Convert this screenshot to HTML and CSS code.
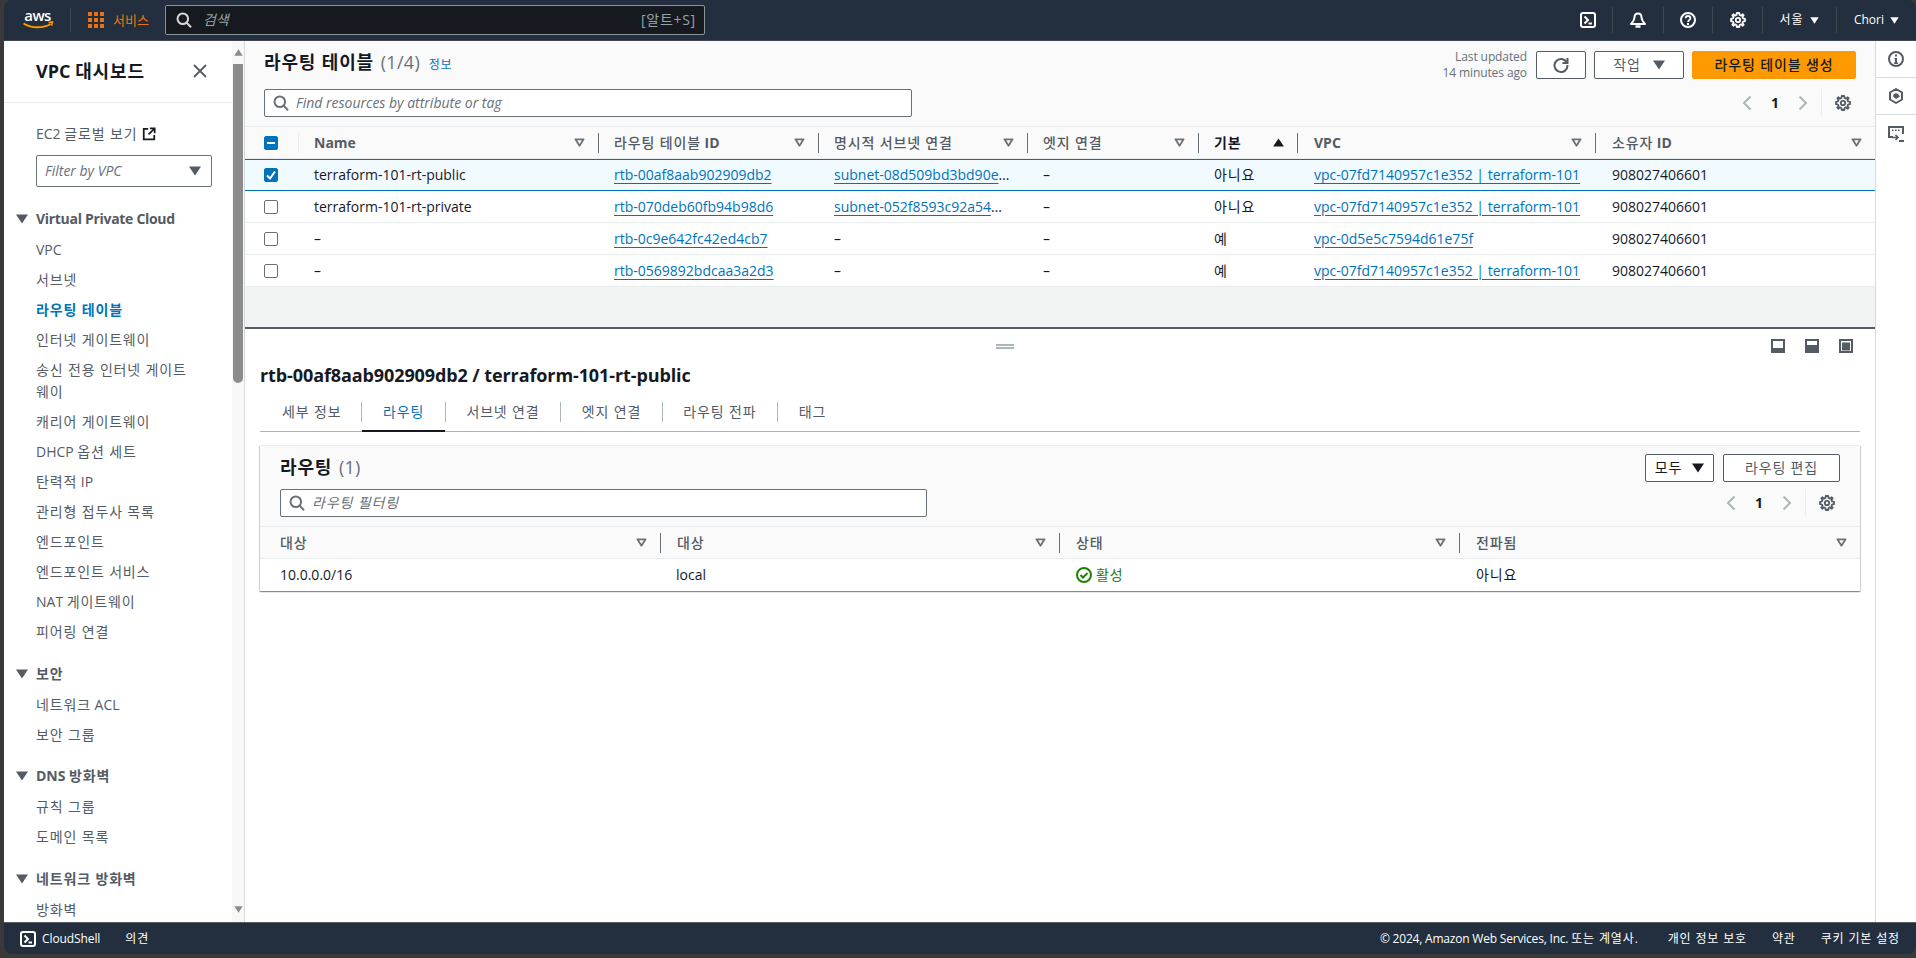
FILE: index.html
```html
<!DOCTYPE html>
<html lang="ko">
<head>
<meta charset="utf-8">
<title>라우팅 테이블 | VPC Console</title>
<link rel="stylesheet" href="styles.css">
</head>
<body>
<svg class="defs" aria-hidden="true">
  <symbol id="sort" viewBox="0 0 12 10"><path d="M1.500 1.500h9L6 8.500z" fill="none" stroke="currentColor" stroke-width="2" stroke-linejoin="round"/></symbol>
  <symbol id="caret" viewBox="0 0 12 10"><path d="M0 .5h12L6 9.500z" fill="currentColor"/></symbol>
  <symbol id="caret-up" viewBox="0 0 12 10"><path d="M0 9.500h12L6 .5z" fill="currentColor"/></symbol>
  <symbol id="search" viewBox="0 0 16 16"><circle cx="6.800" cy="6.800" r="5.300" fill="none" stroke="currentColor" stroke-width="2"/><path d="M10.600 10.600l4.400 4.600" fill="none" stroke="currentColor" stroke-width="2"/></symbol>
  <symbol id="gear" viewBox="0 0 16 16"><path d="M6.800 1h2.400l.4 2 1.400.6 1.700-1.300 1 1-1.300 1.700.6 1.400 2 .4v2.400l-2 .4-.6 1.400 1.300 1.700-1 1-1.700-1.300-1.400.6-.4 2H6.800l-.4-2-1.400-.6-1.700 1.300-1-1L3.600 11 3 9.600l-2-.4V6.800l2-.4.6-1.400-1.300-1.700 1-1L5 3.600 6.400 3z" fill="none" stroke="currentColor" stroke-width="1.800" stroke-linejoin="round"/><circle cx="8" cy="8" r="2.200" fill="none" stroke="currentColor" stroke-width="1.800"/></symbol>
  <symbol id="shell" viewBox="0 0 16 16"><rect x="1" y="1" width="14" height="14" rx="2" fill="none" stroke="currentColor" stroke-width="2"/><path d="M4.500 4.500L8 8l-3.500 3.500" fill="none" stroke="currentColor" stroke-width="2"/><path d="M8.500 11.500h3.500" fill="none" stroke="currentColor" stroke-width="2"/></symbol>
  <symbol id="prev" viewBox="0 0 12 16"><path d="M9.500 1.500L3 8l6.500 6.500" fill="none" stroke="currentColor" stroke-width="2"/></symbol>
  <symbol id="next" viewBox="0 0 12 16"><path d="M2.500 1.500L9 8l-6.500 6.500" fill="none" stroke="currentColor" stroke-width="2"/></symbol>
</svg>

<header class="topbar">
  <a class="logo">
    <svg class="logo-svg" viewBox="0 0 32 22"><text x="15.500" y="12" text-anchor="middle" class="logo-text">aws</text><path d="M1.500 14.500c8 5 20 5 27 .5" fill="none" stroke="#f90" stroke-width="2"/><path d="M26.500 13.500l4-.5-1 3.800" fill="none" stroke="#f90" stroke-width="1.500"/></svg>
  </a>
  <span class="top-sep first"></span>
  <a class="services">
    <svg class="grid-icon" viewBox="0 0 16 16"><path d="M0 0h4v4H0zM6 0h4v4H6zM12 0h4v4h-4zM0 6h4v4H0zM6 6h4v4H6zM12 6h4v4h-4zM0 12h4v4H0zM6 12h4v4H6zM12 12h4v4h-4z" fill="currentColor"/></svg>
    <span>서비스</span>
  </a>
  <div class="global-search">
    <svg class="ico16"><use href="#search"/></svg>
    <span class="gs-placeholder">검색</span>
    <span class="gs-key">[알트+S]</span>
  </div>
  <div class="top-actions">
    <span class="top-btn b1"><svg class="ico16"><use href="#shell"/></svg></span>
    <span class="top-btn b2"><svg class="ico16" viewBox="0 0 16 16"><path d="M8 1.500c2.500 0 3.500 2 3.500 4 0 3 2.500 5 3.500 6.500H1c1-1.500 3.500-3.500 3.500-6.500 0-2 1-4 3.500-4z" fill="none" stroke="currentColor" stroke-width="2" stroke-linejoin="round"/><path d="M5.500 14.500h5" stroke="currentColor" stroke-width="2.500"/></svg></span>
    <span class="top-btn b3"><svg class="ico16" viewBox="0 0 16 16"><circle cx="8" cy="8" r="7" fill="none" stroke="currentColor" stroke-width="2"/><path d="M5.600 6.300c0-3.100 4.800-3.100 4.800 0 0 1.700-2.400 1.900-2.400 3.700" fill="none" stroke="currentColor" stroke-width="1.800"/><path d="M7 11h2v2H7z" fill="currentColor"/></svg></span>
    <span class="top-btn b4"><svg class="ico16"><use href="#gear"/></svg></span>
    <span class="top-btn text region"><span class="ko">서울</span><svg class="caret-sm"><use href="#caret"/></svg></span>
    <span class="top-btn text user">Chori<svg class="caret-sm"><use href="#caret"/></svg></span>
  </div>
</header>

<div class="shell">
  <aside class="sidenav">
    <div class="side-scroll">
      <div class="side-head">
        <h2>VPC <span class="ko">대시보드</span></h2>
        <svg class="close" viewBox="0 0 16 16"><path d="M2 2l12 12M14 2L2 14" fill="none" stroke="currentColor" stroke-width="1.800"/></svg>
      </div>
      <div class="side-body">
        <a class="side-ec2"><span>EC2 <span class="ko">글로벌 보기</span></span><svg class="ext" viewBox="0 0 16 16"><path d="M7 2H2v12h12V9" fill="none" stroke="currentColor" stroke-width="2"/><path d="M9 1.500h5.500V7M14 2L7.500 8.500" fill="none" stroke="currentColor" stroke-width="2"/></svg></a>
        <div class="side-filter"><span>Filter by VPC</span><svg class="caret-md"><use href="#caret"/></svg></div>
        <h3 class="side-sec lat"><svg class="caret-md"><use href="#caret"/></svg>Virtual Private Cloud</h3>
        <ul class="side-list">
          <li>VPC</li><li class="ko">서브넷</li><li class="ko on">라우팅 테이블</li><li class="ko">인터넷 게이트웨이</li><li class="ko">송신 전용 인터넷 게이트웨이</li><li class="ko">캐리어 게이트웨이</li><li>DHCP <span class="ko">옵션 세트</span></li><li><span class="ko">탄력적</span> IP</li><li class="ko">관리형 접두사 목록</li><li class="ko">엔드포인트</li><li class="ko">엔드포인트 서비스</li><li>NAT <span class="ko">게이트웨이</span></li><li class="ko">피어링 연결</li>
        </ul>
        <h3 class="side-sec ko"><svg class="caret-md"><use href="#caret"/></svg>보안</h3>
        <ul class="side-list"><li><span class="ko">네트워크</span> ACL</li><li class="ko">보안 그룹</li></ul>
        <h3 class="side-sec"><svg class="caret-md"><use href="#caret"/></svg><span>DNS <span class="ko">방화벽</span></span></h3>
        <ul class="side-list"><li class="ko">규칙 그룹</li><li class="ko">도메인 목록</li></ul>
        <h3 class="side-sec ko"><svg class="caret-md"><use href="#caret"/></svg>네트워크 방화벽</h3>
        <ul class="side-list"><li class="ko">방화벽</li></ul>
      </div>
    </div>
    <div class="scrolltrack">
      <svg class="sb-arrow"><use href="#caret-up"/></svg>
      <span class="sb-thumb"></span>
      <svg class="sb-arrow bottom"><use href="#caret"/></svg>
    </div>
  </aside>

  <main class="main">
    <section class="upper">
      <div class="upper-head">
        <div class="uh-left">
          <h1><span class="ko">라우팅 테이블</span> <span class="count">(1/4)</span> <a class="info ko">정보</a></h1>
          <div class="input upper-search"><svg class="ico16"><use href="#search"/></svg><span>Find resources by attribute or tag</span></div>
        </div>
        <div class="uh-right">
          <div class="uh-actions">
            <div class="updated">Last updated<br>14 minutes ago</div>
            <button class="btn icon"><svg class="ico16" viewBox="0 0 16 16"><path d="M13.800 5.500A6.500 6.500 0 1 0 14.500 8" fill="none" stroke="currentColor" stroke-width="2"/><path d="M14.500 1v5h-5" fill="none" stroke="currentColor" stroke-width="2"/></svg></button>
            <button class="btn act"><span class="ko">작업</span><svg class="caret-md"><use href="#caret"/></svg></button>
            <button class="btn primary ko">라우팅 테이블 생성</button>
          </div>
          <div class="pager">
            <svg class="chev"><use href="#prev"/></svg><b>1</b><svg class="chev"><use href="#next"/></svg><span class="pager-sep"></span><svg class="ico16 pg-gear"><use href="#gear"/></svg>
          </div>
        </div>
      </div>
      <div class="rt-table">
        <div class="rt-row head">
          <div class="hc chk"><span class="cb ind"><svg viewBox="0 0 14 14"><path d="M3 7h8" stroke="#fff" stroke-width="2"/></svg></span></div>
          <div class="hc first"><b>Name</b><svg class="sort"><use href="#sort"/></svg></div>
          <div class="hc"><span><span class="ko">라우팅 테이블</span> <b>ID</b></span><svg class="sort"><use href="#sort"/></svg></div>
          <div class="hc"><span class="ko">명시적 서브넷 연결</span><svg class="sort"><use href="#sort"/></svg></div>
          <div class="hc"><span class="ko">엣지 연결</span><svg class="sort"><use href="#sort"/></svg></div>
          <div class="hc active"><span class="ko">기본</span><svg class="sort"><use href="#caret-up"/></svg></div>
          <div class="hc"><b>VPC</b><svg class="sort"><use href="#sort"/></svg></div>
          <div class="hc"><span><span class="ko">소유자</span> <b>ID</b></span><svg class="sort"><use href="#sort"/></svg></div>
        </div>
        <div class="rt-row selected">
          <div class="c chk"><span class="cb on"><svg viewBox="0 0 14 14"><path d="M3 7.500l3 3 5-7" fill="none" stroke="#fff" stroke-width="2"/></svg></span></div>
          <div class="c">terraform-101-rt-public</div>
          <div class="c"><a>rtb-00af8aab902909db2</a></div>
          <div class="c"><a>subnet-08d509bd3bd90e08a</a></div>
          <div class="c">–</div>
          <div class="c ko">아니요</div>
          <div class="c"><a>vpc-07fd7140957c1e352 | terraform-101</a></div>
          <div class="c">908027406601</div>
        </div>
        <div class="rt-row">
          <div class="c chk"><span class="cb"></span></div>
          <div class="c">terraform-101-rt-private</div>
          <div class="c"><a>rtb-070deb60fb94b98d6</a></div>
          <div class="c narrow"><a>subnet-052f8593c92a5471c</a></div>
          <div class="c">–</div>
          <div class="c ko">아니요</div>
          <div class="c"><a>vpc-07fd7140957c1e352 | terraform-101</a></div>
          <div class="c">908027406601</div>
        </div>
        <div class="rt-row">
          <div class="c chk"><span class="cb"></span></div>
          <div class="c">–</div>
          <div class="c"><a>rtb-0c9e642fc42ed4cb7</a></div>
          <div class="c">–</div>
          <div class="c">–</div>
          <div class="c ko">예</div>
          <div class="c"><a>vpc-0d5e5c7594d61e75f</a></div>
          <div class="c">908027406601</div>
        </div>
        <div class="rt-row">
          <div class="c chk"><span class="cb"></span></div>
          <div class="c">–</div>
          <div class="c"><a>rtb-0569892bdcaa3a2d3</a></div>
          <div class="c">–</div>
          <div class="c">–</div>
          <div class="c ko">예</div>
          <div class="c"><a>vpc-07fd7140957c1e352 | terraform-101</a></div>
          <div class="c">908027406601</div>
        </div>
      </div>
      <div class="upper-fill"></div>
    </section>

    <section class="lower">
      <div class="split-bar">
        <span class="handle"></span>
        <div class="split-icons">
          <svg class="split-ico" viewBox="0 0 14 14"><rect x="1" y="1" width="12" height="12" fill="none" stroke="currentColor" stroke-width="2"/><rect x="1" y="9" width="12" height="4" fill="currentColor"/></svg>
          <svg class="split-ico" viewBox="0 0 14 14"><rect x="1" y="1" width="12" height="12" fill="none" stroke="currentColor" stroke-width="2"/><rect x="1" y="6" width="12" height="7" fill="currentColor"/></svg>
          <svg class="split-ico" viewBox="0 0 14 14"><rect x="1" y="1" width="12" height="12" fill="none" stroke="currentColor" stroke-width="2"/><rect x="3" y="3.500" width="8" height="8" fill="currentColor"/></svg>
        </div>
      </div>
      <h2 class="detail-title">rtb-00af8aab902909db2 / terraform-101-rt-public</h2>
      <nav class="tabs ko">
        <a class="tab t1">세부 정보</a><a class="tab t2 on">라우팅</a><a class="tab t3">서브넷 연결</a><a class="tab t4">엣지 연결</a><a class="tab t5">라우팅 전파</a><a class="tab t6">태그</a>
      </nav>
      <div class="card">
        <div class="card-head">
          <div class="ch-left">
            <h3><span class="ko">라우팅</span> <span class="count">(1)</span></h3>
            <div class="input card-search"><svg class="ico16"><use href="#search"/></svg><span class="ko">라우팅 필터링</span></div>
          </div>
          <div class="ch-right">
            <div class="ch-actions">
              <button class="btn all"><span class="ko">모두</span><svg class="caret-md"><use href="#caret"/></svg></button>
              <button class="btn edit ko">라우팅 편집</button>
            </div>
            <div class="pager">
              <svg class="chev"><use href="#prev"/></svg><b>1</b><svg class="chev"><use href="#next"/></svg><span class="pager-sep"></span><svg class="ico16 pg-gear"><use href="#gear"/></svg>
            </div>
          </div>
        </div>
        <div class="r-row head">
          <div class="hc first"><span class="ko">대상</span><svg class="sort"><use href="#sort"/></svg></div>
          <div class="hc"><span class="ko">대상</span><svg class="sort"><use href="#sort"/></svg></div>
          <div class="hc"><span class="ko">상태</span><svg class="sort"><use href="#sort"/></svg></div>
          <div class="hc"><span class="ko">전파됨</span><svg class="sort"><use href="#sort"/></svg></div>
        </div>
        <div class="r-row body">
          <div class="c">10.0.0.0/16</div>
          <div class="c">local</div>
          <div class="c status"><svg class="ico16" viewBox="0 0 16 16"><circle cx="8" cy="8" r="7" fill="none" stroke="currentColor" stroke-width="2"/><path d="M4.500 8l2.500 2.500L11.500 6" fill="none" stroke="currentColor" stroke-width="2"/></svg><span class="ko">활성</span></div>
          <div class="c ko">아니요</div>
        </div>
      </div>
    </section>
  </main>

  <aside class="rail">
    <span class="rail-btn"><svg class="ico16" viewBox="0 0 16 16"><circle cx="8" cy="8" r="7" fill="none" stroke="currentColor" stroke-width="2"/><path d="M7 3.500h2v2H7zM6.500 7H9v4.500h1V13H6v-1.500h1V8.500h-.5z" fill="currentColor"/></svg></span>
    <span class="rail-btn"><svg class="ico16" viewBox="0 0 16 16"><path d="M8 1l6 3.500v7L8 15l-6-3.500v-7z" fill="none" stroke="currentColor" stroke-width="2" stroke-linejoin="round"/><path d="M5 8.500a3 3 0 0 1 5-2.500l2 2.500L8 11z" fill="currentColor"/></svg></span>
    <span class="rail-btn"><svg class="ico16" viewBox="0 0 16 16"><path d="M5 11H1V1h14v7" fill="none" stroke="currentColor" stroke-width="2"/><path d="M4 3.500h1.500V5H4zM7 3.500h1.500V5H7zM10 3.500h1.500V5H10z" fill="currentColor"/><path d="M4 11.500h5.500M7.500 9l2.500 2.500L7.500 14" fill="none" stroke="currentColor" stroke-width="1.600"/><path d="M11 15h5" stroke="currentColor" stroke-width="2"/></svg></span>
  </aside>
</div>

<footer class="footer">
  <a class="cs"><svg class="ico16"><use href="#shell"/></svg>CloudShell</a>
  <a class="fb ko">의견</a>
  <div class="f-right">
    <span class="copy">© 2024, Amazon Web Services, Inc. <span class="ko">또는 계열사.</span></span>
    <a class="ko">개인 정보 보호</a><a class="ko">약관</a><a class="ko">쿠키 기본 설정</a>
  </div>
</footer>
</body>
</html>
```

FILE: styles.css
```css
* { box-sizing: border-box; }
html, body { margin: 0; height: 100%; }
body {
  display: flex; flex-direction: column; height: 958px; overflow: hidden;
  padding: 0 0 4px 4px; background: #393939; color: #16191f;
  font: 14px/22px "Open Sans", "Noto Sans CJK KR", sans-serif;
}
.defs { position: absolute; width: 0; height: 0; }
h1, h2, h3, ul { margin: 0; padding: 0; }
a { color: inherit; }
button { font: inherit; }
.ko { letter-spacing: .85px; }
.ico16 { width: 16px; height: 16px; flex: none; display: block; }
.caret-sm { width: 9px; height: 7px; flex: none; }
.caret-md { width: 12px; height: 10px; flex: none; }

.topbar {
  flex: none; height: 41px; display: flex; align-items: center;
  background: #232f3e; color: #fff; border-radius: 8px 8px 0 0; padding-left: 18px;
  border-bottom: 1px solid #414750;
}
.logo { width: 32px; height: 22px; display: block; }
.logo-svg { width: 32px; height: 22px; display: block; overflow: visible; }
.logo-text { font: 600 15px "Open Sans", sans-serif; fill: #fff; letter-spacing: -.6px; }
.top-sep { width: 1px; height: 24px; background: #414750; }
.top-sep.first { margin-left: 16px; }
.services { display: flex; align-items: center; gap: 9px; color: #ec7211; margin-left: 17px; font-size: 13px; }
.grid-icon { width: 16px; height: 16px; }
.global-search {
  width: 540px; height: 30px; margin-left: 16px; display: flex; align-items: center;
  border: 1px solid #879596; border-radius: 2px; background: #16191f; color: #d5dbdb; padding: 0 8px 0 10px;
}
.gs-placeholder { margin-left: 11px; font-style: italic; color: #95a5a6; }
.gs-key { margin-left: auto; color: #95a5a6; letter-spacing: .7px; }
.top-actions { margin-left: auto; display: flex; align-items: center; height: 100%; }
.top-btn {
  display: flex; align-items: center; justify-content: center; height: 26px;
  border-left: 1px solid #414750; font-size: 12px;
}
.top-btn.b1 { width: 48px; border-left: 0; }
.top-btn.b2 { width: 51px; }
.top-btn.b3 { width: 49px; }
.top-btn.b4 { width: 50px; }
.top-btn.region { width: 74px; gap: 7px; }
.top-btn.user { width: 80px; gap: 6px; }

.shell { flex: 1; min-height: 0; display: flex; background: #fff; }

.sidenav { flex: none; width: 241px; display: flex; border-right: 1px solid #d5dbdb; }
.side-scroll { width: 228px; flex: none; overflow: hidden; color: #545b64; }
.side-head {
  height: 62px; padding: 0 24px 2px 32px; display: flex; align-items: center; justify-content: space-between;
  border-bottom: 1px solid #eaeded;
}
.side-head h2 { font-size: 18px; font-weight: 700; color: #16191f; line-height: 24px; }
.close { width: 16px; height: 16px; color: #545b64; }
.side-body { padding: 20px 20px 0 32px; }
.side-ec2 { display: flex; align-items: center; gap: 5px; }
.ext { width: 14px; height: 14px; color: #16191f; }
.side-filter {
  margin-top: 10px; height: 32px; display: flex; align-items: center; justify-content: space-between;
  padding: 0 10px 0 8px; border: 1px solid #687078; border-radius: 2px; font-style: italic; color: #687078;
}
.side-filter .caret-md { color: #545b64; }
.side-sec { display: flex; align-items: center; font-size: 14px; line-height: 22px; font-weight: 700; margin: 15.6px 0 5px -20px; color: #545b64; }
.side-filter + .side-sec { margin-top: 21px; }
.side-sec.lat { letter-spacing: -.3px; }
.side-sec .caret-md { margin-right: 8px; }
.side-list { list-style: none; }
.side-list li { padding: 4px 0; max-width: 158px; }
.side-list li.on { color: #0073bb; font-weight: 700; }

.scrolltrack { width: 12px; flex: none; background: #f8f8f8; display: flex; flex-direction: column; align-items: center; }
.sb-arrow { width: 9px; height: 7px; color: #8c8c8c; margin-top: 8px; flex: none; }
.sb-arrow.bottom { margin-top: auto; margin-bottom: 9px; }
.sb-thumb { width: 10px; height: 319px; margin-top: 8px; background: #8c8c8c; border-radius: 0 0 5px 5px; }

.main { flex: 1; min-width: 0; display: flex; flex-direction: column; }

.upper { flex: none; height: 288px; display: flex; flex-direction: column; background: #fafafa; border-bottom: 2px solid #545b64; }
.upper-head { flex: none; height: 86px; display: flex; justify-content: space-between; padding: 8px 19px 0 19px; border-bottom: 1px solid #eaeded; }
.upper-head h1 { font-size: 18px; line-height: 24px; height: 24px; font-weight: 700; margin-top: 1px; }
.count { font-weight: 400; color: #687078; letter-spacing: .3px; margin-left: 2px; }
.info { font-size: 12px; font-weight: 400; color: #0073bb; margin-left: 4px; }
.input { display: flex; align-items: center; gap: 7px; height: 28px; border: 1px solid #687078; border-radius: 2px; background: #fff; padding: 0 8px; font-style: italic; color: #687078; }
.upper-search { width: 648px; margin-top: 15px; }
.uh-right { display: flex; flex-direction: column; align-items: flex-end; }
.uh-actions { display: flex; align-items: center; gap: 8px; }
.updated { text-align: right; font-size: 12px; line-height: 16px; color: #687078; margin-right: 1px; letter-spacing: -.1px; }
.btn { display: inline-flex; align-items: center; justify-content: center; height: 28px; border: 1px solid #545b64; border-radius: 2px; background: #fff; color: #545b64; padding: 0; }
.btn.icon { width: 50px; }
.btn.act { width: 90px; gap: 12px; }
.btn.primary { width: 164px; background: #ff9900; border-color: #ff9900; color: #16191f; font-weight: 500; }
.pager { display: flex; align-items: center; height: 28px; margin-top: 8px; }
.pager b { width: 44px; text-align: center; font-size: 14px; }
.chev { width: 12px; height: 16px; color: #aab7b8; }
.pager-sep { width: 1px; height: 28px; background: #eaeded; margin-left: 12px; }
.pg-gear { margin: 0 5px 0 13px; color: #545b64; }

.rt-row { display: grid; grid-template-columns: 53px 300px 220px 209px 171px 99px 298px 280px; height: 32px; align-items: center; background: #fff; border-bottom: 1px solid #eaeded; }
.rt-row.head { background: #fafafa; color: #545b64; }
.rt-row.selected { background: #f1faff; border-top: 1px solid #0073bb; border-bottom: 1px solid #0073bb; }
.hc { display: flex; align-items: center; justify-content: space-between; height: 20px; padding: 0 13px 0 15px; border-left: 1px solid #687078; font-weight: 500; min-width: 0; }
.hc b { font-weight: 700; }
.hc.active { color: #16191f; font-weight: 700; }
.hc.active .sort { color: #16191f; }
.hc.chk { border-left: 0; justify-content: flex-start; padding: 0 0 0 19px; }
.hc.first { border-left: 1px solid #eaeded; }
.sort { width: 11px; height: 9px; color: #687078; flex: none; }
.rt-row .hc:nth-child(n+7) { padding-left: 16px; }
.c { padding: 0 16px 0 16px; white-space: nowrap; overflow: hidden; text-overflow: ellipsis; }
.c.narrow { padding-right: 24px; }
.rt-row .c:nth-child(7) { padding: 0 0 0 17px; }
.rt-row .c:nth-child(8) { padding-left: 17px; }
.c a { color: #0073bb; text-decoration: underline; text-underline-offset: 3px; }
.c.chk { padding: 0 0 0 19px; overflow: visible; display: flex; align-items: center; }
.cb { display: block; width: 14px; height: 14px; border: 1px solid #687078; border-radius: 2px; background: #fff; }
.cb svg { display: block; width: 14px; height: 14px; margin: -1px; }
.cb.on, .cb.ind { background: #0073bb; border-color: #0073bb; }
.upper-fill { flex: 1; background: #f2f3f3; }

.lower { flex: 1; min-height: 0; background: #fff; padding: 0 15px; }
.split-bar { height: 34px; display: flex; align-items: center; justify-content: center; position: relative; }
.handle { width: 18px; height: 5px; border-top: 2px solid #aab7b8; border-bottom: 2px solid #aab7b8; margin-right: 110px; }
.split-icons { position: absolute; right: 7px; top: 10px; display: flex; gap: 20px; color: #545b64; }
.split-ico { width: 14px; height: 14px; display: block; }
.detail-title { font-size: 18px; line-height: 24px; font-weight: 700; letter-spacing: -.1px; }
.tabs { display: flex; align-items: center; height: 39px; margin-top: 6px; border-bottom: 1px solid #aab7b8; color: #545b64; }
.tab { display: flex; align-items: center; height: 20px; padding: 0 20.6px; border-left: 1px solid #aab7b8; position: relative; white-space: nowrap; }
.tab.t1 { border-left: 0; padding: 0 20px 0 22px; }
.tab.on { color: #0073bb; }
.tab.on::after { content: ""; position: absolute; left: 0; right: 0; bottom: -10px; height: 2px; background: #16191f; }
.card { margin-top: 13px; border-top: 1px solid #eaeded; box-shadow: 0 1px 1px 0 rgba(0,28,36,.3), 1px 1px 1px 0 rgba(0,28,36,.15), -1px 1px 1px 0 rgba(0,28,36,.15); background: #fff; }
.card-head { height: 81px; background: #fafafa; display: flex; justify-content: space-between; padding: 8px 20px 0 20px; border-bottom: 1px solid #eaeded; }
.card-head h3 { font-size: 18px; line-height: 26px; font-weight: 700; }
.card-search { width: 647px; margin-top: 9px; }
.ch-right { display: flex; flex-direction: column; align-items: flex-end; }
.ch-actions { display: flex; gap: 9px; }
.btn.all { width: 69px; gap: 10px; color: #16191f; }
.btn.edit { width: 117px; }
.card .pager { margin-top: 7px; }
.r-row { display: grid; grid-template-columns: 400px 399px 400px 401px; align-items: center; }
.r-row.head { height: 32px; background: #fafafa; color: #545b64; border-bottom: 1px solid #eaeded; }
.r-row.body { height: 32px; }
.r-row .hc { padding-left: 16px; }
.r-row .hc.first { border-left: 0; padding-left: 20px; }
.r-row .c:first-child { padding-left: 20px; }
.r-row .c:nth-child(n+3) { padding-left: 17px; }
.status { display: flex; align-items: center; gap: 4px; color: #1d8102; }

.rail { flex: none; width: 41px; background: #fff; border-left: 1px solid #d5dbdb; display: flex; flex-direction: column; color: #545b64; }
.rail-btn { display: flex; align-items: center; justify-content: center; height: 37px; border-bottom: 1px solid #d5dbdb; }
.rail-btn:last-child { border-bottom: 0; }

.footer { flex: none; height: 32px; background: #232f3e; border-top: 1px solid #545b64; border-radius: 0 0 8px 8px; color: #fff; display: flex; align-items: center; font-size: 12px; padding: 0 16px; }
.cs { display: flex; align-items: center; gap: 6px; font-weight: 500; letter-spacing: -.1px; }
.fb { margin-left: 25px; }
.f-right { margin-left: auto; display: flex; gap: 25px; }
.copy { margin-right: 4px; letter-spacing: -.2px; }
.copy .ko { letter-spacing: .85px; }
```
